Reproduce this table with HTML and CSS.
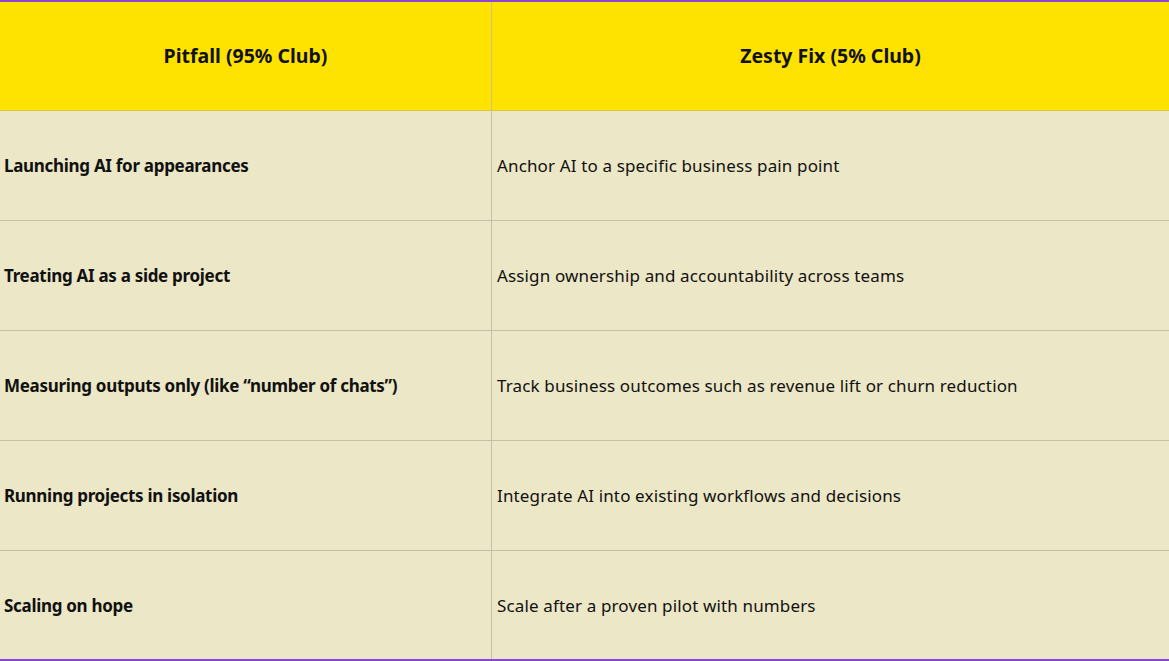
FILE: index.html
```html
<!DOCTYPE html>
<html>
<head>
<meta charset="utf-8">
<link rel="stylesheet" href="styles.css">
</head>
<body>
<div class="table">
  <div class="cell head first">Pitfall (95% Club)</div>
  <div class="cell head">Zesty Fix (5% Club)</div>

  <div class="cell pit first">Launching AI for appearances</div>
  <div class="cell fix">Anchor AI to a specific business pain point</div>

  <div class="cell pit first">Treating AI as a side project</div>
  <div class="cell fix">Assign ownership and accountability across teams</div>

  <div class="cell pit first">Measuring outputs only (like “number of chats”)</div>
  <div class="cell fix">Track business outcomes such as revenue lift or churn reduction</div>

  <div class="cell pit first">Running projects in isolation</div>
  <div class="cell fix">Integrate AI into existing workflows and decisions</div>

  <div class="cell pit first last">Scaling on hope</div>
  <div class="cell fix last">Scale after a proven pilot with numbers</div>
</div>
</body>
</html>
```

FILE: styles.css
```css
html, body {
  margin: 0;
  padding: 0;
  background: #ece7c6;
}
.table {
  width: 1169px;
  height: 661px;
  box-sizing: border-box;
  border-top: 2px solid #8d45d6;
  border-bottom: 2px solid #8d45d6;
  display: grid;
  grid-template-columns: 492px 1fr;
  grid-template-rows: 109px repeat(4, 110px) 1fr;
  font-family: "Noto Sans", "Open Sans", sans-serif;
  font-size: 17px;
  color: #111;
  background: #ece7c6;
}
.cell {
  display: flex;
  align-items: center;
  border-bottom: 1px solid #c4bfa4;
  box-sizing: border-box;
}
.cell.first {
  border-right: 1px solid #c4bfa4;
}
.cell.last {
  border-bottom: none;
}
.head {
  background: #ffe300;
  justify-content: center;
  font-weight: 700;
  font-size: 19.5px;
  border-bottom-color: #d8c54a;
  padding-bottom: 1px;
}
.head.first {
  border-right-color: #cfc27a;
}
.pit {
  font-weight: 700;
  padding-left: 4px;
  letter-spacing: -0.3px;
}
.fix {
  padding-left: 5px;
  font-weight: 400;
  letter-spacing: 0.14px;
}
```
